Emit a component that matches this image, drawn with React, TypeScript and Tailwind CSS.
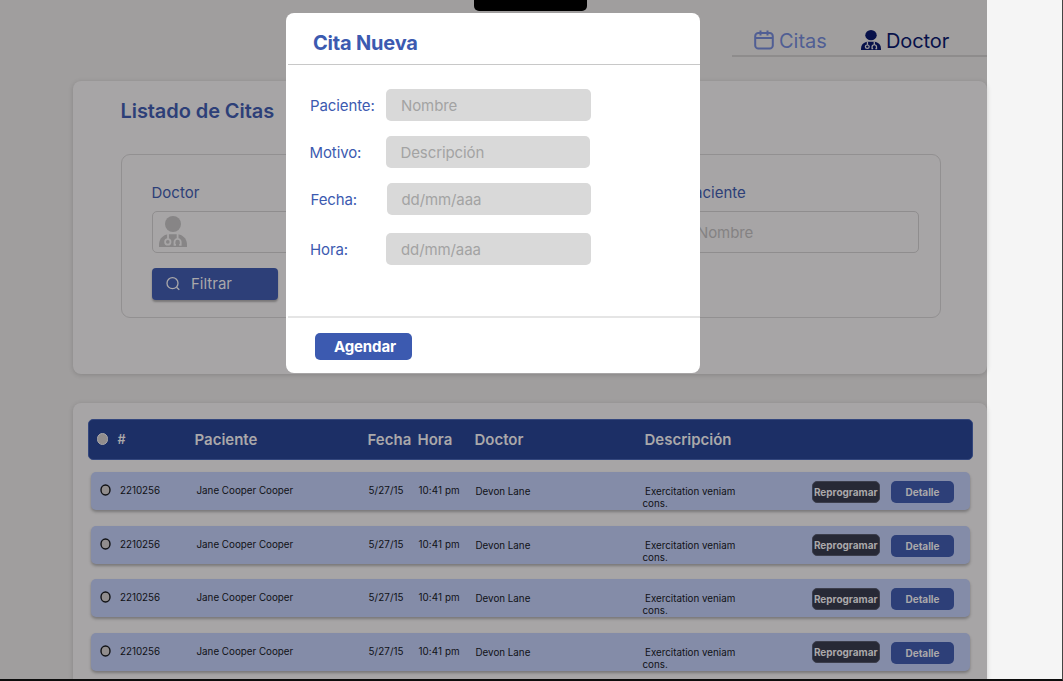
import React from "react";

function DoctorIcon({ className, cut }: { className: string; cut: string }) {
  return (
    <svg viewBox="0 0 28 31" preserveAspectRatio="none" className={className}>
      <circle cx="14" cy="8" r="8" fill="currentColor" />
      <path d="M0 31v-2c0-5.500 3-9 7-10.300l2-.4h10l2 .4c4 1.300 7 4.800 7 10.300v2z" fill="currentColor" />
      <g fill="none" stroke={cut} strokeWidth="1.800">
        <path d="M9 18v5" />
        <circle cx="8.800" cy="25.900" r="2.700" />
        <path d="M18.600 18v4.500M17 28.900h-1.500v-2.800a3.100 3.300 0 0 1 6.200 0v2.800h-1.500" />
      </g>
    </svg>
  );
}

function CalendarIcon() {
  return (
    <svg viewBox="0 0 20 20" className="mb-0.5 h-5 w-5 shrink-0" fill="none" stroke="currentColor" strokeWidth="2">
      <rect x="1.200" y="3" width="17.600" height="15.600" rx="3.200" />
      <path d="M1.200 8h17.600M6.500 .5v5M13.500 .5v5" />
    </svg>
  );
}

const header = "mt-px flex items-center whitespace-nowrap text-[15px] leading-[18px] font-semibold";

function Row() {
  return (
    <div className="grid h-[38px] w-[879.500px] shrink-0 grid-cols-[29.500px_76.500px_172px_50px_57px_167px_169.500px_79px_63px] rounded-[5px] bg-[#848ca8] text-[9.800px] leading-3 whitespace-nowrap text-[#101116] shadow-[0_2px_3px_rgba(0,0,0,0.28)]">
      <div className="pt-3 pl-[9.500px]">
        <svg viewBox="0 0 11 12" className="h-3 w-[11px]">
          <ellipse cx="5.500" cy="6" rx="4.500" ry="5" fill="#918d8d" stroke="#101114" strokeWidth="1.400" />
        </svg>
      </div>
      <div className="pt-[13px]">2210256</div>
      <div className="pt-[13px]">Jane Cooper Cooper</div>
      <div className="pt-[13px] tracking-[0.1px]">5/27/15</div>
      <div className="pt-[13px] tracking-[0.1px]">10:41 pm</div>
      <div className="pt-3.5">Devon Lane</div>
      <div className="pt-3.5">
        <span className="pl-[2.500px]">Exercitation veniam</span>
        <br />
        cons.
      </div>
      <div className="pt-[8.500px]">
        <div className="flex h-[22px] w-[67.500px] items-center justify-center rounded-[5px] border border-[#3c3e4c] bg-[#272936] text-[10px] font-bold text-[#aaa8aa]">Reprogramar</div>
      </div>
      <div className="pt-[9px]">
        <div className="flex h-[22px] items-center justify-center rounded-[5px] bg-[#2d3f78] text-[10px] font-bold text-[#aaa8aa]">Detalle</div>
      </div>
    </div>
  );
}

function Field({ label, placeholder, className }: { label: string; placeholder: string; className: string }) {
  return (
    <div className={"flex items-center text-[15px] tracking-[-0.1px] " + className}>
      <label className="w-[76px] shrink-0 pt-0.5 text-[#3c5ab0]">{label}</label>
      <div className="flex h-8 w-[204.500px] items-center rounded-[5px] bg-[#d9d9d9] pt-0.5 pl-[15px] text-[#a3a3a3]">{placeholder}</div>
    </div>
  );
}

function Modal() {
  return (
    <div className="absolute top-[12.500px] left-[286px] flex h-[360.500px] w-[414px] flex-col rounded-[8px] bg-white">
      <div className="ml-0.5 flex h-[52.500px] shrink-0 items-center border-b border-[#c8c8c8] pt-[9px] pl-[25px] text-xl font-bold tracking-[-0.2px] text-[#3c5ab0]">Cita Nueva</div>
      <div className="flex h-[251px] shrink-0 flex-col pt-6 pl-[23.500px]">
        <Field label="Paciente:" placeholder="Nombre" className="ml-[0.500px] mb-[15px] h-8" />
        <Field label="Motivo:" placeholder="Descripción" className="mb-[15px] h-8" />
        <Field label="Fecha:" placeholder="dd/mm/aaa" className="ml-px mb-[18px] h-8" />
        <Field label="Hora:" placeholder="dd/mm/aaa" className="ml-[0.500px] h-8" />
      </div>
      <div className="ml-0.5 border-t-2 border-[#e5e5e5] pt-[15px] pl-[27px]">
        <button className="flex h-[27px] w-[97px] items-center justify-center rounded-[5px] bg-[#3c5ab0] pt-px pl-[3px] text-[15px] font-bold tracking-[-0.1px] text-white">Agendar</button>
      </div>
    </div>
  );
}

export default function App() {
  return (
    <div className="relative flex h-[681px] w-[1063px] overflow-hidden border-r border-b-2 border-r-[#444] border-b-[#0d0d0d] bg-[#f5f5f5] font-['Inter',sans-serif]">
      <div className="flex h-[679px] w-[987px] shrink-0 flex-col bg-[#a09e9e]">
        <nav className="ml-[732px] flex h-[57px] shrink-0 items-end border-b-2 border-[#8e8c8c] pl-[22px] text-xl">
          <div className="flex w-[107px] items-center gap-[5px] text-[#505e94]">
            <CalendarIcon />
            <span>Citas</span>
          </div>
          <div className="flex items-center gap-[5px] text-[#07114a]">
            <DoctorIcon className="mb-[3px] h-5 w-5 shrink-0" cut="#a09e9e" />
            <span className="tracking-[-0.1px]">Doctor</span>
          </div>
        </nav>

        <section className="mt-6 ml-[73px] h-[293px] w-[914px] shrink-0 rounded-[8px] bg-[#a7a5a6] pt-[18px] pl-[47.500px] shadow-[0_1px_5px_rgba(0,0,0,0.16)]">
          <h1 className="h-[55px] text-xl leading-6 font-semibold tracking-[-0.08px] text-[#2d3f78]">Listado de Citas</h1>
          <div className="flex h-[164px] w-[820px] flex-col rounded-[9px] border-[1.500px] border-[#929091] px-[30px] pt-[27px]">
            <div className="flex justify-between">
              <div>
                <div className="h-[29px] pt-px text-[15px] leading-5 text-[#2d3f78]">Doctor</div>
                <div className="flex h-[42px] w-[240px] items-center rounded-[5px] border border-[#8f8d8e] pl-[6.500px] text-[#878586]">
                  <DoctorIcon className="mb-px h-[31px] w-7" cut="#a7a5a6" />
                </div>
              </div>
              <div className="-mr-[9px]">
                <div className="h-[29px] pt-px pl-0.5 text-[15px] leading-5 text-[#2d3f78]">Paciente</div>
                <div className="flex h-[42px] w-[236px] items-center rounded-[5px] border border-[#8f8d8e] pt-0.5 pl-[13.500px] text-[15px] tracking-[-0.1px] text-[#848283]">Nombre</div>
              </div>
            </div>
            <button className="mt-[14.500px] flex h-8 w-[126px] items-center rounded-[4px] bg-[#2d3f78] pl-3.5 text-[15px] text-[#aaa8aa] shadow-[0_2px_2px_rgba(0,0,0,0.28)]">
              <svg viewBox="0 0 14 14" className="mr-[11.500px] h-3.5 w-3.5" fill="none" stroke="currentColor" strokeWidth="1.300">
                <circle cx="6.500" cy="6.200" r="5.500" />
                <path d="M10.500 10.200l2.800 2.600" />
              </svg>
              <span className="pt-0.5">Filtrar</span>
            </button>
          </div>
        </section>

        <section className="mt-[29px] ml-[73px] flex h-[290px] w-[914px] shrink-0 flex-col rounded-t-[8px] bg-[#a7a5a6] pt-[15.500px] pl-[14.500px] shadow-[0_1px_5px_rgba(0,0,0,0.16)]">
          <div className="grid h-[41px] w-[885px] shrink-0 grid-cols-[29px_77px_173px_50px_57px_170px_1fr] rounded-[5px] border border-[#34477d] bg-[#1c2f66] text-[#aaa8aa]">
            <div className="flex items-center pl-2">
              <div className="h-3 w-[11px] rounded-full border border-[#aaa8aa] bg-[#918d8d]" />
            </div>
            <div className="flex items-center pt-0.5 text-[12.500px] font-semibold">#</div>
            <div className={header}>Paciente</div>
            <div className={header}>Fecha</div>
            <div className={header}>Hora</div>
            <div className={header}>Doctor</div>
            <div className={header}>Descripción</div>
          </div>
          <div className="mt-[12.500px] flex flex-col gap-[15.500px] pl-[3px]">
            <Row />
            <Row />
            <Row />
            <Row />
          </div>
        </section>
      </div>

      <div className="absolute top-0 left-[474px] h-[11px] w-[113px] rounded-b-[5px] bg-black" />
      <Modal />
    </div>
  );
}
